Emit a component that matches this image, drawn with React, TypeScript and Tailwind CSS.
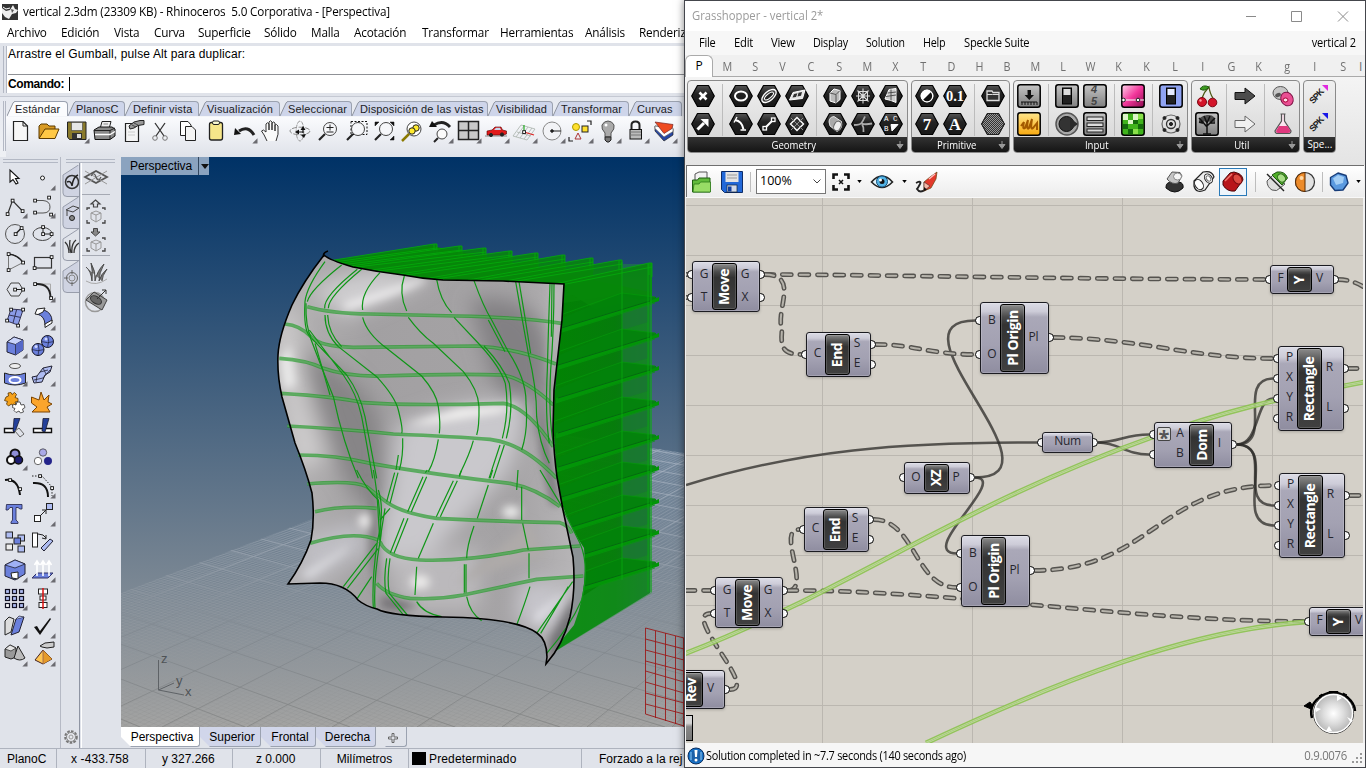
import React from "react";

type Kids = { children?: React.ReactNode };
const P = ({ d, f = "none", s = "#222", w = 1, o }: { d: string; f?: string; s?: string; w?: number; o?: number }) => (
  <path d={d} fill={f} stroke={s} strokeWidth={w} opacity={o} />
);
const C = ({ x, y, r, f = "none", s = "#222", w = 1 }: { x: number; y: number; r: number; f?: string; s?: string; w?: number }) => (
  <circle cx={x} cy={y} r={r} fill={f} stroke={s} strokeWidth={w} />
);
const Sq = ({ p, f = "#fff" }: { p: number[][]; f?: string }) => (
  <>{p.map(([x, y], i) => <rect key={i} x={x - 1.3} y={y - 1.3} width="2.8" height="2.8" fill={f} stroke="#111" strokeWidth=".9" />)}</>
);
const Cell = ({ children, tri }: Kids & { tri?: boolean }) => (
  <svg viewBox="0 0 28 28" className="h-7 w-7 shrink-0">
    {children}
    {tri && <path d="M27.5 21.3v5.2h-5.2z" fill="#6b6b70" />}
  </svg>
);

/* ---------- Rhino: standard toolbar ---------- */
const T = true;
const lens = <><C x={16} y={12} r={6.5} s="#444" f="#f6f7fa" /><P d="M11 17L5 23" s="#222" w={2.2} /></>;
const toolbar: [React.ReactNode, boolean?][] = [
  [<><P d="M7.5 4.5H17L21.5 9V23.5H7.5z" f="#f6f6f6" s="#222" w={1.2} /><P d="M17 4.5V9H21.5" s="#222" /></>],
  [<><P d="M5 21V9l2-2h6l2 2h6v3" f="#d99b25" s="#5c3b00" /><P d="M5 21.5L11 12H25L21 21.5z" f="#ffc845" s="#5c3b00" /></>],
  [<><P d="M5.5 5H24v17.5H7.5L5.5 20z" f="#8a7a2c" s="#222" /><rect x="9.5" y="5.5" width="11" height="8" fill="#e6e6e6" stroke="#444" strokeWidth=".6" /><rect x="10" y="16" width="10" height="6" fill="#333" /><rect x="15" y="17" width="4" height="4" fill="#ddd" /></>, T],
  [<><P d="M10 12L12 4.5H21L19 12z" f="#eee" s="#222" /><P d="M4 13L9 10H22L25 12V19L20 22.5H5z" f="#8a8a8a" s="#111" /><P d="M4 13.5H20L25 11M20 13.5V22" s="#222" /><P d="M5 17.5H20L25 14.5" s="#fff" w={1.3} /><P d="M13.5 7H18M13 9.5H17" s="#888" /></>],
  [<><P d="M7.5 6.5H20.5V24.5H7.5z" f="#f4f4f4" s="#222" w={1.2} /><P d="M11 9l5-4 6-1.5h4v4l-6 1-4 2.5-4 1z" f="#999" s="#222" /><P d="M14 8l4 2M16 6l4 2" s="#333" w={0.8} /><P d="M10 15H17M10 18H17" s="#ccc" /></>],
  [<><P d="M9 6L18 19M19 6L10 19" s="#333" w={1.3} /><C x={9} y={21} r={2.3} s="#777" /><C x={19} y={21} r={2.3} s="#777" /></>],
  [<><P d="M6.5 4.5H14L17 8V18.5H6.5z" f="#fff" s="#222" /><P d="M11.5 9.5H18L21.5 13V23.5H11.5z" f="#f4f4f4" s="#222" /></>],
  [<><rect x="7.5" y="5.5" width="13" height="17.5" rx="2" fill="#f6e68a" stroke="#222" strokeWidth="1.3" /><rect x="10.5" y="4" width="7" height="3.5" rx="1.5" fill="#f7f7d0" stroke="#222" /></>],
  [<><P d="M24 18Q18 8 9 14" s="#222" w={3} /><path d="M4 18l1-7 6 6z" fill="#111" /></>, T],
  [<P d="M9 24Q6 17 3.5 14Q5 11.5 8 15V7Q9.5 4.5 11 7V13V5Q12.5 2.5 14 5V13V6Q15.5 4 17 6V14V8Q18.5 6.5 20 9Q21 18 18 24" f="#fafafa" s="#333" />],
  [<><ellipse cx="14" cy="14" rx="10" ry="3.8" fill="none" stroke="#888" strokeDasharray="5 1.5" /><ellipse cx="14" cy="14" rx="3.8" ry="10" fill="none" stroke="#999" strokeDasharray="4 1" /><path d="M9 15l4-2.500v5zM17 9l2.500 4h-5zM15 18l5-1-2 4z" fill="#111" /><P d="M12 15h5M17 12v4" s="#111" w={1.2} /></>],
  [<>{lens}<P d="M12.5 10.5h7M16 7.5v6M12.5 15h7" s="#222" /></>],
  [<><rect x="9" y="4.5" width="16" height="13" fill="none" stroke="#111" strokeDasharray="2 1.5" />{lens}</>],
  [<>{lens}<P d="M5 5h4L5 9zM24 5h-4l4 4zM24 23v-4l-4 4z" f="#111" s="#111" w={0.5} /></>],
  [<><C x={16} y={12} r={7} f="#fff" s="#444" /><C x={18} y={11} r={3.2} f="#ffea2e" /><C x={14} y={14} r={3.2} f="#ffea2e" /><P d="M11 17L4 24" w={2.5} s="#8b7a00" /></>],
  [<><C x={16} y={17} r={5} f="#fafafa" s="#444" /><P d="M12 21L8 25" w={2} /><P d="M24 10Q17 2 8 8" w={2.8} /><path d="M3 10l3-6 5 6z" fill="#111" /></>, T],
  [<><rect x="4.5" y="4.5" width="20" height="18" fill="#c9c9c9" stroke="#222" strokeWidth="1.5" /><P d="M14.5 4.5V22.5M4.5 13.5H24.5" w={1.5} /></>, T],
  [<><P d="M3 19H25" s="#888" /><path d="M5 18v-4l5-1 3-3h6l1.500 3 4 1v3l-3 1H7z" fill="#e21a1a" stroke="#500" strokeWidth=".6" /><path d="M12 13l2-2.200h4l1 2.200z" fill="#c9d6ea" /><C x={9} y={18} r={1.6} f="#222" /><C x={20} y={17.5} r={1.6} f="#222" /></>, T],
  [<><P d="M3 19L17 23L25 12L11 8zM7 15L21 19M6 20L14 9M10 21L18 10M14 22L22 11" s="#a9b3ac" w={0.8} /><P d="M14 15L24 18" s="#d22" w={1.3} /><P d="M14 15V8" s="#2a2" w={1.2} /><Sq p={[[14, 15]]} /></>, T],
  [<><C x={14} y={14} r={9} s="#888" f="#f2f3f6" /><P d="M14 14H23" s="#222" /><C x={14} y={14} r={1.3} f="#222" /></>, T],
  [<><P d="M21 4h4v4M3 20v4h4" w={1.2} /><C x={10} y={10} r={3.5} f="#ffe02e" s="#a90" /><rect x="16" y="9" width="6" height="6" fill="#ffe02e" stroke="#222" /><P d="M12 16L15 22H9z" s="#a33" /></>, T],
  [<><P d="M11 20V16Q7 12 8 8Q10 4 14 4Q18 4 20 8Q21 12 17 16V20z" f="#aaa" s="#555" /><P d="M11 20h6v3l-2 2h-2l-2-2z" f="#777" s="#222" /><C x={12} y={8} r={1.5} f="#fff" s="none" /></>, T],
  [<><P d="M9.5 13V8Q9.5 4.5 13.5 4.5Q17.5 4.5 17.5 8V13" w={2} /><rect x="8" y="12.5" width="11.5" height="9.5" fill="#bbb" stroke="#111" /><P d="M8 15H19M8 18H19" s="#777" /></>, T],
  [<><P d="M5 9V14L14 24L23 18V12z" f="#2747a6" s="#222" w={0.7} /><P d="M5 9V11.5L14 20L23 14.5V11z" f="#fff" s="#666" w={0.7} /><P d="M5 5L23 7.500L22 11.5L14 16.5z" f="#ee4a20" s="#722" w={0.7} /></>, T],
];

/* ---------- Rhino: main tool palette ---------- */
const B1 = "#aebcf2";
const B2 = "#6b80dc";
const tools: [React.ReactNode, boolean?][] = [
  [<P d="M10 6V18L13 15.5L16 20L18 19L15.5 14.5H19z" f="#fff" s="#111" w={1.1} />],
  [<C x={14.5} y={14} r={2} f="#fff" />, T],
  [<><P d="M7.5 22.5L12.5 8.5L22.5 19" s="#333" w={1.2} /><Sq p={[[7.5, 22], [12.5, 8.5], [22.5, 19]]} /></>, T],
  [<><P d="M7 8.5H15Q22 9 22 15Q22 21 15 21H7" s="#555" /><Sq p={[[7, 8.5], [21, 5.5], [7, 20.5], [23, 22.5]]} /></>, T],
  [<><C x={15} y={14} r={9.5} s="#555" /><P d="M15.5 14L21.5 8" w={1.4} /><Sq p={[[15.5, 14], [21.5, 8]]} /></>, T],
  [<><ellipse cx="14.5" cy="14" rx="9.5" ry="6.5" fill="none" stroke="#444" /><P d="M15 14H23M15 14V7" /><Sq p={[[15, 14], [23.5, 14], [15, 7]]} /></>, T],
  [<><P d="M8.5 22V6Q18 7 23 14.5L8.5 22" s="#777" /><P d="M8.5 6Q18 7 23 14.5" w={1.5} /><Sq p={[[8.5, 6], [23, 14.5], [8.5, 22]]} /></>, T],
  [<><rect x="6.5" y="9.5" width="17" height="10.5" fill="none" stroke="#333" strokeWidth="1.2" /><Sq p={[[6.5, 20], [23.5, 9]]} /></>, T],
  [<><P d="M7 13.5L11 7H19L23 13.5L19 20H11z" s="#444" /><P d="M15 13.5H23" /><Sq p={[[15, 13.5], [23, 13.5]]} /></>, T],
  [<><P d="M7 8H22.5V22" s="#aaa" /><P d="M7 8Q22.5 7 22.5 22" w={2} /><Sq p={[[7, 8], [23, 22]]} /></>, T],
  [<><P d="M11 5L23 6L18 21L7 17z" f="#8a9be8" s="#335" /><P d="M9 11L21 13.5M16.5 6L13 19" s="#335" /><Sq p={[[11, 5.5], [23, 5.5], [7, 16.5], [18, 21.5]]} /></>, T],
  [<><P d="M9 10L16 6Q24 9 24 17L17 21Q17 12 9 10z" f={B2} s="#223" /><P d="M7 10l2-5 8-1-2 4-5 2.500zM17 20v3.500l7-4.500v-3z" f="#fff" s="#222" /></>, T],
  [<><P d="M7 10L14 5L23 8V18L15.5 23L7 20z" f={B2} s="#223" /><P d="M7 10L15.500 12.5L23 8L14 5z" f="#c9d4fb" s="#223" w={0.8} /><path d="M15.500 12.500L23 8V18L15.500 23z" fill="#5568c8" /><P d="M15.5 12.5V22.5" s="#223" w={0.7} /></>, T],
  [<><C x={10} y={17.5} r={6} f={B2} s="#112" /><C x={19.5} y={9.5} r={6} f={B2} s="#112" /><P d="M4 17.5Q10 20 16 17.5M10 11.5Q12 17 10 23.5M13.5 9.5Q20 12 25.5 9.5M19.5 3.5Q22 9 19.5 15.5" s="#112" w={0.6} /><C x={8} y={14.5} r={1.5} f="#cdd6ff" s="none" /><C x={18} y={7} r={1.5} f="#cdd6ff" s="none" /></>, T],
  [<><ellipse cx="15" cy="6" rx="5.5" ry="2.5" fill="#eee" stroke="#555" /><P d="M4.5 13Q15 17 25.5 13V23Q15 27 4.5 23z" f={B2} s="#222" /><ellipse cx="15" cy="20" rx="5.5" ry="3" fill="none" stroke="#fff" strokeWidth="2" /></>, T],
  [<><P d="M4 17L9 16L15 8L24 6L22 12L17 15L14 22L6 23z" f={B1} s="#223" /><P d="M6 20L15 18L22 10M9 16L8 22M12 12L20 10M15 8L18 14" s="#223" w={0.8} /></>, T],
  [<><path d="M6 9l2.500-1L8 5l3-.5 1 2 2.500-2 2 2-1.500 3 3 1v3l-3 .5 1 3-3 1-1.500-2-3 2-2-2 1-2.500-3-1z" fill="#f5a11a" stroke="#553300" strokeWidth=".8" /><path d="M13 16l3 1 1-3 3 0 1 3 3-.5 1 3-2.500 1.500 1 3-3 1-1.500-2-3 1.500-2-2 1-2-2.500-1z" fill="#fff" stroke="#333" strokeWidth=".8" /></>],
  [<P d="M3.5 9L11 12L13 4L16 12L21 7L20 14L24 16L19 19L22 24H4L9 19L3.500 15z" f="#fba52c" s="#7a4300" />],
  [<><P d="M4.5 12.5H14V16.5H4.5z" f="#fff" w={1.4} s="#111" /><P d="M14 2.5H20L15 16L13 15z" f="#23409a" s="#112" w={0.7} /><P d="M15 15L19 12L24 18L20 21z" s="#666" /></>],
  [<><P d="M5.5 12.5H23.5V16.5H5.5z" f="#fff" w={1.4} s="#111" /><P d="M15 2.5H21L17 16L14 15z" f="#23409a" s="#112" w={0.7} /></>],
  [<><C x={15} y={10} r={4.5} f="#8e8ed8" s="#111" w={2} /><C x={11} y={16} r={4} f="#fff" s="#111" w={2} /><C x={18.5} y={16} r={4} f="#1c1c70" s="#111" w={1.5} /></>, T],
  [<><C x={15} y={8.5} r={3.7} f="#aaaae8" s="#444" w={0.8} /><C x={10} y={17} r={3.7} f="#fff" s="#444" w={0.8} /><C x={20} y={17} r={3.7} f="#23238a" s="#23238a" w={0.8} /></>],
  [<><P d="M5 8Q18 6 20 23" w={2} s="#111" /><Sq p={[[10, 8], [20, 17]]} /></>],
  [<><P d="M5 11Q20 10 20 25" w={2} s="#111" /><path d="M4 4H14L24 15V24" fill="none" stroke="#222" strokeDasharray="1.5 1.5" /><Sq p={[[12, 4], [24, 16]]} /></>, T],
  [<P d="M6.5 4.5H22V9H20L18 7.5H16V20L18 22V23.5H11V22L12.5 20V7.5H10L8 10H6z" f={B2} s="#224" w={0.8} />],
  [<><rect x="18.5" y="3.5" width="6" height="6" fill={B1} stroke="#222" /><rect x="6.5" y="15.5" width="6" height="6" fill="#fff" stroke="#222" /><P d="M13 15L18 10M18 14V10H14" /></>, T],
  [<>{[[6, 4, B1], [18, 7, B1], [14, 10, B2], [6, 16, "#eee"], [18, 18, B1]].map(([x, y, f], i) => <rect key={i} x={x as number} y={y as number} width="6.5" height="6" fill={f as string} stroke="#222" />)}</>],
  [<><rect x="4.5" y="5" width="5" height="14" fill="#fff" stroke="#222" /><P d="M10 6Q16 6 18 10M14 10l4 1 0-4" /><P d="M13 20L22 11L25 13L16 23z" f={B1} s="#223" /></>],
  [<><P d="M5 9L15 4L25 8V18L15 24L5 20z" f={B2} s="#223" /><P d="M5 9L15 12L25 8L15 4z" f="#9fb0f5" s="#223" w={0.8} /><P d="M11 17L18 16V23L12 22z" f="#fff" s="#222" /></>, T],
  [<><P d="M4 22L9 17H25L20 22z" f={B2} s="#336" /><P d="M9 20V6M15 20V6M21 20V6M6.500 9l2.500-4 2.500 4M12.500 9l2.500-4 2.500 4M18.500 9l2.500-4 2.500 4" s="#fff" w={1.6} /></>, T],
  [<>{[0, 1, 2].map(r => [0, 1, 2].map(c => <rect key={`${r}${c}`} x={5.5 + c * 7} y={5.5 + r * 7} width="4" height="4" fill={c === 0 && r === 2 ? "#fff" : B1} stroke="#112" strokeWidth="1.2" />))}</>, T],
  [<><rect x="10.5" y="5" width="9" height="5" fill="#fff" stroke="#222" /><rect x="12" y="12" width="6" height="4" fill="#fff" stroke="#222" /><rect x="11" y="18.5" width="8" height="5" fill="#fff" stroke="#222" /><P d="M15 4V25" s="#d11" w={1.5} /></>, T],
  [<><P d="M5 9L9 5L14 7L11 20L5 23z" f="#ddd" s="#222" /><P d="M16 7L24 5L19 20L11 23z" f={B2} s="#223" /><P d="M16 7L19 4L24 5" f={B1} s="#223" w={0.7} /></>, T],
  [<path d="M6 15l3-1 3 5L22 6l1 1L12 23z" fill="#111" />, T],
  [<><P d="M5 9L10 5L16 8V17L11 19L5 17z" f="#999" s="#222" /><P d="M5 9L11 11L16 8L10 5z" f="#e5e5e5" s="#222" w={0.7} /><P d="M18 6L25 18Q20 22 14 18z" f="#bbb" s="#222" /></>, T],
  [<><P d="M15 10L24 19L15 24L7 20z" f="#ffc552" s="#422" /><path d="M15 10L24 19L15 24z" fill="#e59a2a" /><P d="M15 10V24" s="#855" w={0.7} /><P d="M12 6l5-3 9-1v5l-7 1-5-1z" f="#ccc" s="#222" /></>, T],
];

const leftMenu: [string, string][] = [
  ["Archivo", "w-[54px]"], ["Edición", "w-[53px]"], ["Vista", "w-[40px]"], ["Curva", "w-[44px]"], ["Superficie", "w-[66px]"], ["Sólido", "w-[47px]"],
  ["Malla", "w-[43px]"], ["Acotación", "w-[68px]"], ["Transformar", "w-[78px]"], ["Herramientas", "w-[85px]"], ["Análisis", "w-[54px]"], ["Renderiz", "w-[44px]"],
];
const leftTabs: [string, string][] = [
  ["Estándar", "w-[61px]"], ["PlanosC", "w-[57px]"], ["Definir vista", "w-[74px]"], ["Visualización", "w-[81px]"], ["Seleccionar", "w-[72px]"],
  ["Disposición de las vistas", "w-[136px]"], ["Visibilidad", "w-[65px]"], ["Transformar", "w-[76px]"], ["Curvas", "w-[53px]"],
];

function Tab({ name, w, on }: { name: string; w: string; on: boolean }) {
  return (
    <div className={`flex h-[15px] shrink-0 ${w}`}>
      <svg viewBox="0 0 8 15" className="h-[15px] w-2 shrink-0">
        <path d="M0 15L6 2Q7 .5 8 .5V15z" fill={on ? "#fbfcfe" : "#ced5ea"} />
        <path d="M0 15L6 2Q7 .5 8 .5" fill="none" stroke="#8e949f" />
      </svg>
      <div className={`flex-1 whitespace-nowrap rounded-tr-[4px] border-t border-r border-[#9ba2b0] text-[11px] leading-[14px] tracking-[0.15px] text-[#1c1c24] ${on ? "bg-[#fbfcfe]" : "bg-[#ced5ea]"}`}>{name}</div>
    </div>
  );
}

/* ---------- Rhino: perspective viewport ---------- */
function groundLines(vx: number, step: number, from: number, to: number) {
  let d = "";
  for (let x = from; x <= to; x += step) d += `M${vx} 132L${x.toFixed(1)} 727`;
  return d;
}
const upper = [
  "M112 230Q180 250 300 252L560 258Q760 262 875 280",
  "M45 282Q90 285 125 322Q150 350 250 352L620 348Q740 355 858 402",
  "M28 385Q110 390 160 415Q230 440 330 438Q560 430 700 435Q770 450 850 525",
  "M32 490Q200 500 280 518Q420 528 700 520Q770 530 850 650",
  "M52 588Q200 595 370 612Q560 620 660 628Q760 640 860 745",
  "M85 675Q200 675 300 700Q500 735 720 760Q800 775 870 830",
];
const upperThin = [
  "M165 95Q110 170 105 215Q100 300 120 320Q150 400 190 500Q220 640 265 745", "M108 220Q106 290 124 325", "M215 105Q120 180 112 215",
  "M262 118Q160 200 164 235M275 118Q175 200 175 235", "M165 255Q165 310 205 350L320 440Q375 500 385 540Q400 600 395 610M398 625Q400 680 388 720",
  "M173 255Q175 310 215 350", "M330 128Q270 190 278 240M278 262Q290 310 350 355L455 438Q500 490 505 530Q512 580 508 610M505 628Q495 690 475 725",
  "M403 138Q385 190 410 243M415 262Q450 310 490 340L580 425Q625 480 627 530Q628 590 620 615M610 632Q600 670 568 735",
  "M500 148Q510 210 545 248M552 262L630 345Q690 410 706 460Q719 540 697 625M642 348Q700 410 718 460Q731 540 709 625M690 645L657 745M703 645L670 745",
  "M612 152Q640 230 665 270L715 365Q770 450 768 520Q775 600 755 660M655 270L705 365", "M737 155Q755 260 775 370Q800 470 800 560Q808 640 838 700M747 155Q765 260 782 370",
  "M840 162Q835 300 832 420Q825 560 838 640", "M852 162Q852 300 842 420Q835 560 850 640M846 162L844 320",
  "M125 325L230 435Q270 490 285 560Q300 640 320 745M118 300L220 435Q260 490 275 560Q290 640 308 745", "M135 340L180 495", "M385 675L378 720",
];
const lower = [
  "M112 42Q250 30 290 50Q340 90 355 100Q400 130 500 145Q700 155 870 158Q895 165 905 190", "M135 125Q220 105 320 115",
  "M330 215Q350 265 450 270Q600 275 760 240L930 228", "M120 220Q250 180 325 210", "M320 340Q350 375 420 385Q500 390 580 375Q720 345 800 328L940 318",
];
const lowerThin = [
  "M260 0Q290 60 325 90L330 140Q335 200 330 215", "M310 0Q322 60 325 140L330 215Q310 330 315 415", "M325 60Q345 120 322 215Q305 330 310 415",
  "M374 8L350 95M384 8L360 100", "M402 145L361 248M414 145L372 250", "M459 20L413 125M470 20L424 125", "M490 160L445 265", "M550 32L499 140M562 32L511 140",
  "M655 45L622 145", "M612 168Q590 230 590 265", "M744 0L740 60M755 50L755 150", "M758 160L775 240", "M350 265Q340 330 348 370L400 435M360 265Q350 330 358 370L412 435",
  "M440 290L435 375", "M440 395Q460 430 515 440", "M583 283V368M588 283V368", "M590 380Q600 430 635 452", "M777 250V325", "M780 350Q765 400 740 465", "M320 220L220 350M325 235L232 355",
  "M305 320L262 385", "M908 335L800 490M895 350L812 490", "M830 550Q900 470 935 390Q960 290 930 220Q910 180 870 100L810 0", "M330 150L360 115M345 115L330 210", "M575 0L568 20M668 0L660 25M472 0L466 8",
];
const surfacePath = "M324 255Q329 260 353 267Q378 272 403 275Q423 279 443 280L503 281L564 284L562 320L554 390L553 430Q554 455 557 477L563 510L573 557Q576 590 570 617Q563 645 546 664L547 657Q547 640 537 633Q517 618 443 617Q390 616 377 609Q365 606 358 600Q345 583 320 583L288 584Q303 563 311 540Q315 520 312 493Q306 470 295 443L282 397Q277 375 278 355Q279 335 292 305Q303 282 324 255z";
const shelves: number[] = [298, 334, 367, 402, 436, 467, 500, 531, 563];
const fins: [number, number, number, number][] = [
  [437, 244, 328, 261], [462, 246, 335, 264], [486, 248, 350, 266], [512, 251, 372, 270], [538, 253, 400, 274], [565, 255, 430, 278], [593, 258, 468, 280], [622, 260, 505, 281], [652, 263, 555, 284],
];

function Scene() {
  return (
    <svg viewBox="121 157 563 570" className="col-start-1 row-start-1 h-[570px] w-[563px]">
      <defs>
        <linearGradient id="sky" x1="0" y1="0" x2="0" y2="1"><stop offset="0" stopColor="#003266" /><stop offset="1" stopColor="#a3a3a2" /></linearGradient>
        <linearGradient id="major" gradientUnits="userSpaceOnUse" x1="0" y1="440" x2="0" y2="727"><stop offset="0" stopColor="#aab6c6" /><stop offset=".4" stopColor="#98a2ae" /><stop offset=".65" stopColor="#808890" /><stop offset="1" stopColor="#838483" /></linearGradient>
        <linearGradient id="minor" gradientUnits="userSpaceOnUse" x1="0" y1="440" x2="0" y2="727"><stop offset="0" stopColor="#c6d0dc" /><stop offset=".5" stopColor="#a3aab2" /><stop offset="1" stopColor="#8a8b8b" /></linearGradient>
        <linearGradient id="box" gradientUnits="userSpaceOnUse" x1="555" y1="0" x2="655" y2="0"><stop offset="0" stopColor="#008400" /><stop offset=".6" stopColor="#047d08" /><stop offset="1" stopColor="#147029" /></linearGradient>
        <linearGradient id="surf" gradientUnits="userSpaceOnUse" x1="280" y1="0" x2="575" y2="0"><stop offset="0" stopColor="#b5b3b4" /><stop offset=".3" stopColor="#a2a0a2" /><stop offset=".8" stopColor="#a5a3a5" /><stop offset="1" stopColor="#b7b5b7" /></linearGradient>
        <clipPath id="sc"><path d={surfacePath} /></clipPath>
        <clipPath id="gc"><path d="M121 593L540 431L684 453V727H121z" /></clipPath>
        <filter id="b10" x="-50%" y="-50%" width="200%" height="200%"><feGaussianBlur stdDeviation="10" /></filter>
        <filter id="b4" x="-50%" y="-50%" width="200%" height="200%"><feGaussianBlur stdDeviation="4.5" /></filter>
      </defs>
      <rect x="121" y="157" width="563" height="570" fill="url(#sky)" />
      <g clipPath="url(#gc)" fill="none">
        <path d={groundLines(1327, 8.5, -1400, 1250)} stroke="url(#minor)" strokeWidth=".6" opacity=".4" />
        <path d={groundLines(-1295, 10.5, -300, 2600)} stroke="url(#minor)" strokeWidth=".6" opacity=".4" />
        <path d={groundLines(1327, 85, -1368, 1250)} stroke="url(#major)" opacity=".75" />
        <path d={groundLines(-1295, 105, -280, 2600)} stroke="url(#major)" opacity=".75" />
      </g>
      <path d="M330 262L432 246L650 292V593L549 655L577 590L557 480L553 420L563 284z" fill="url(#box)" opacity=".97" />
      <path d="M623 264H652V593L548 656L577 600L623 570z" fill="#1d9a2c" opacity=".4" />
      {fins.map(([x, y, lx, ly], i) => (
        <g key={i}>
          <path d={`M${lx} ${ly}L${x - 2} ${y}H${x}V${y + 34}L${lx + 40} ${ly + 25}z`} fill="#078709" opacity=".85" />
          <path d={`M${lx} ${ly}L${x - 3} ${y}H${x}V${y + 14}M${x - 3} ${y}V${y + 12}M${lx + 6} ${ly + 1}L${x} ${y + 4}`} stroke="#05a80b" fill="none" strokeWidth=".9" />
        </g>
      ))}
      {shelves.map((y, i) => (
        <g key={y}>
          {i < 8 && <path d={`M622 ${y - 3}L648 ${y + 4}V${y + 24}L622 ${y + 32}z`} fill="#1d6f38" opacity=".6" />}
          <path d={`M552 ${y + 24}L622 ${y - 5}L656 ${y - 1}V${y + 3}L552 ${y + 34}z`} fill="#02830a" opacity=".9" />
          <path d={`M556 ${y + 31}L652 ${y + 2}L659 ${y - 1}V${y + 3}L556 ${y + 36}z`} fill="#029507" />
          <path d={`M552 ${y + 20}L622 ${y - 5}L655 ${y - 1}M556 ${y + 36}L655 ${y + 5}`} stroke="#04990a" fill="none" strokeWidth=".7" />
          <path d={`M558 ${y + 31}L650 ${y + 3}`} stroke="#066312" strokeWidth=".9" />
        </g>
      ))}
      <path d="M648 264V592M651 263V592M622 262V580" stroke="#07ab10" fill="none" opacity=".8" />
      <path d="M556 484Q565 520 584 548Q588 590 574 625L548 657z" fill="#8d9396" />
      <path d={surfacePath} fill="url(#surf)" />
      <g clipPath="url(#sc)">
        <g filter="url(#b10)">
          <path d="M300 350Q360 370 380 420L388 500Q370 520 345 480z" fill="#868486" />
          <path d="M470 300Q540 290 548 350L548 440Q510 420 490 370z" fill="#828083" />
          <path d="M276 330L294 300L304 400L325 460L295 470z" fill="#cfcdce" />
          <path d="M310 290Q380 255 430 280L345 318z" fill="#cfced0" />
          <path d="M398 425Q470 395 532 402L510 470L430 555L375 560L390 480z" fill="#c9c8cc" />
          <path d="M300 540L360 520L370 550L300 590z" fill="#c0bfc5" />
          <path d="M385 560L480 545L480 610L400 610z" fill="#bbb9bc" />
          <path d="M520 580L570 585L560 635L515 620z" fill="#c6c5cb" />
        </g>
        <g filter="url(#b4)">
          <path d="M345 310Q390 298 428 280L422 278Q365 296 343 304z" fill="#f0eff0" />
          <path d="M405 425L460 408L520 404L500 413L430 424z" fill="#f1f0ef" />
          <path d="M280 360L290 345L296 385L284 390z" fill="#e9e9e9" />
          <ellipse cx="365" cy="521" rx="6" ry="7" fill="#f4f3f3" />
          <ellipse cx="511" cy="512" rx="9" ry="6" fill="#eeeeed" />
          <ellipse cx="420" cy="582" rx="10" ry="7" fill="#ecebea" />
          <path d="M300 575L350 545L345 552L310 578z" fill="#dcdce0" />
          <path d="M535 615L565 592L560 600L535 625z" fill="#e3e3e8" />
          <path d="M370 480L380 520L377 590L369 560z" fill="#7c7a7c" />
          <path d="M540 400L552 460L560 505L551 505L540 450z" fill="#777578" />
          <path d="M548 640L575 595L578 630L550 665z" fill="#747377" />
          <path d="M382 595L420 605L400 612L380 608z" fill="#777578" />
          <path d="M455 585L530 522L545 555L480 575z" fill="#aeaaa9" />
          <path d="M552 286L562 286L558 340L549 380z" fill="#bcbabc" />
        </g>
      </g>
      <g fill="none">
        <g transform="translate(270 230) scale(.33333)">
          {upper.map((d, i) => <g key={i}><path d={d} stroke="#139a1a" strokeWidth="11" opacity=".62" /><path d={d} stroke="#62aa65" strokeWidth="5" opacity=".8" /></g>)}
          {upperThin.map((d, i) => <path key={i} d={d} stroke="#0f9617" strokeWidth="3.6" />)}
        </g>
        <g transform="translate(270 470) scale(.33333)">
          {lower.map((d, i) => <g key={i}><path d={d} stroke="#139a1a" strokeWidth="11" opacity=".62" /><path d={d} stroke="#62aa65" strokeWidth="5" opacity=".8" /></g>)}
          {lowerThin.map((d, i) => <path key={i} d={d} stroke="#0f9617" strokeWidth="3.6" />)}
        </g>
        <path d={surfacePath} stroke="#000" strokeWidth="1.6" />
        <path d="M324 257Q322 253 328 251" stroke="#000" strokeWidth="1.5" />
        <path d="M645.5 628V714M655.5 631V718M665.5 633V721M675.5 636V724M683.5 638V727M645.5 628L684 638M645.5 639L684 649M645.5 650L684 660M645.5 661L684 671M645.5 671L684 682M645.5 682L684 693M645.5 693L684 703M645.5 704L684 714M645.5 714L684 726" stroke="#9b1b1b" strokeWidth=".9" />
        <path d="M158.5 660V690L184 695M158.5 690L174 683" stroke="#5e6266" />
      </g>
      <g fontFamily="Liberation Sans, sans-serif" fontSize="13" fill="#4f5356"><text x="161" y="663">z</text><text x="176" y="685">y</text><text x="185" y="696">x</text></g>
    </svg>
  );
}

/* ---------- Rhino: side bar ---------- */
function SideTab({ on, children }: Kids & { on?: boolean }) {
  return (
    <svg viewBox="0 0 17 32" className="h-8 w-[17px]">
      <path d="M16.5 0L1 10V28Q1 31.5 5 31.5H17" fill={on ? "#e0e3ea" : "#cfd3e2"} stroke="#989dab" />
      {children}
    </svg>
  );
}

function Rhino() {
  return (
    <section className="flex h-[768px] w-[684px] shrink-0 flex-col overflow-hidden bg-[#e0e3ea] text-black">
      <header className="flex h-[23px] items-center bg-white pl-[2px]">
        <svg viewBox="0 0 16 16" className="h-4 w-4"><rect width="16" height="16" fill="#333" /><path d="M0 4l4 3 4-1 3-5 2 4 3 1-2 3-4 1-3 5-4-2-3-4z" fill="#eee" /><path d="M1 3l3 2 4-1" stroke="#fff" fill="none" /><path d="M9 5l3 1-2 3z" fill="#555" /></svg>
        <span className="ml-[5px] origin-left scale-x-[0.976] whitespace-pre font-['Open_Sans',sans-serif] text-[12px] tracking-[-0.18px]">{"vertical 2.3dm (23309 KB) - Rhinoceros  5.0 Corporativa - [Perspectiva]"}</span>
      </header>
      <nav className="flex h-5 items-center overflow-hidden bg-white pl-[7px] font-['Open_Sans',sans-serif] text-[12px] tracking-[-0.18px]">
        {leftMenu.map(([t, w]) => <span key={t} className={`shrink-0 origin-left scale-x-[0.98] whitespace-nowrap ${w}`}>{t}</span>)}
      </nav>
      <div className="flex h-[53px] pt-[3px] pb-[3px] pl-[3px]">
        <div className="h-[47px] w-1 border-x border-[#b3b8c4]" />
        <div className="flex-1 bg-white pl-px text-[12px]">
          <div className="h-[29px] border-b border-[#8f9196] leading-[16px] tracking-[0.13px]">Arrastre el Gumball, pulse Alt para duplicar:</div>
          <div className="flex h-[18px] items-center font-bold"><span className="tracking-[-0.4px]">Comando:</span><span className="ml-[5px] h-[14px] w-px bg-black" /></div>
        </div>
      </div>
      <div className="flex h-[61px] border-t border-[#c5c9d3] bg-gradient-to-b from-[#e6e9f0] to-[#eef0f4] pt-1 pl-[3px]">
        <div className="h-[50px] w-[3px] shrink-0 border-x border-[#b3b8c4]" />
        <div className="flex flex-col overflow-hidden">
          <div className="ml-px flex h-[15px]">{leftTabs.map(([t, w], i) => <Tab key={t + i} name={t} w={w} on={i === 0} />)}</div>
          <div className="flex h-[41px] w-[678px] border-t border-[#f3f5f9] bg-gradient-to-b from-[#fafbfd] to-[#dfe2e9]">{toolbar.map(([g, t], i) => <Cell key={i} tri={t}>{g}</Cell>)}</div>
        </div>
      </div>
      <div className="flex h-[591px]">
        <aside className="flex w-[60px] shrink-0 flex-col pt-[2px]">
          <div className="ml-[3px] h-[4px] w-[55px] border-y border-[#b3b8c4]" />
          <div className="mt-px grid w-14 grid-cols-2">{tools.map(([g, t], i) => <Cell key={i} tri={t}>{g}</Cell>)}</div>
        </aside>
        <aside className="flex w-[61px] shrink-0 flex-col border-l border-[#b6bac5] pt-[2px]">
          <div className="ml-[5px] h-[4px] w-[49px] border-y border-[#b3b8c4]" />
          <div className="flex flex-1">
            <div className="flex w-[22px] flex-col items-end border-r border-[#8f95a3] pt-[2px]">
              <SideTab><C x={10} y={17} r={6.5} s="#333" w={1.5} /><P d="M5 17q4-2 5 4q1-9 6-11" w={1.5} /></SideTab>
              <SideTab><P d="M4 13l7-4 6 2-6 4zM5 14v5" s="#444" /><C x={10} y={21} r={2.5} f="#888" /></SideTab>
              <SideTab on><P d="M3 13q4 4 4 11M8 11q-1 6 1 13M14 11q-5 4-4 13M17 14q-5 3-5 10" w={1.3} s="#333" /></SideTab>
              <SideTab><C x={10} y={17} r={5.5} s="#666" /><C x={10} y={17} r={3} s="#888" /><P d="M10 9v4M10 21v4M2 17h4" s="#666" /></SideTab>
              <svg viewBox="0 0 16 16" className="mt-auto mb-[3px] h-4 w-4"><circle cx="8" cy="8" r="5.8" fill="none" stroke="#777" strokeWidth="2" strokeDasharray="2.6 1.2" /><circle cx="8" cy="8" r="4.5" fill="#e6e8ed" stroke="#888" /><circle cx="8" cy="8" r="2" fill="none" stroke="#999" /></svg>
            </div>
            <div className="ml-px flex flex-1 flex-col items-center border-l border-white pr-[11px]">
              <Cell><P d="M3 14L14 8L25 14L14 20z" s="#555" w={1.8} /><P d="M3 8L25 21M3 21L25 8" s="#999" /><P d="M9 13Q12 8 14 14T19 14" s="#555" w={1.2} /></Cell>
              <div className="mt-[3px] h-px w-7 bg-[#a5a9b3]" />
              <div className="mt-[3px]"><Cell><P d="M13.5 2l4.5 4H15.500v3h-4V6H9z" s="#444" w={1.200} /><P d="M5 12v-2h3M20 10h3v2M5 22v3h3M23 22v3h-3" s="#444" w={1.3} /><P d="M9 15l5-2 5 2v6l-5 3-5-3zM9 15l5 2 5-2M14 17v7" s="#999" /></Cell></div>
              <Cell><P d="M13.5 10l4.5-4H15.500V2.500h-4v3.500H9z" s="#444" f="#888" /><P d="M5 14v-2h3M20 12h3v2M5 22v3h3M23 22v3h-3" s="#444" w={1.3} /><P d="M9 16l5-2 5 2v6l-5 3-5-3zM9 16l5 2 5-2M14 18v7" s="#999" /></Cell>
              <div className="mt-[1px] h-px w-7 bg-[#a5a9b3]" />
              <div className="mt-[3px] flex flex-col">
                <Cell><P d="M4 8Q9 12 10 22Q11 12 9 4Q14 12 13 22Q15 12 22 5Q17 14 17 22Q19 15 25 10Q20 17 20 22" f="#777" s="#444" w={0.9} /><P d="M4 22Q14 28 25 20" s="#aaa" /></Cell>
                <Cell><C x={13} y={15} r={9.5} s="#999" w={1.5} /><P d="M4 13L12 5L25 13L20 23z" f="#999" s="#444" /><ellipse cx="14" cy="13" rx="6" ry="3.500" transform="rotate(30 14 13)" fill="#666" stroke="#333" /><P d="M15 12L24 3M20 3h4v4" s="#333" /></Cell>
              </div>
            </div>
          </div>
        </aside>
        <div className="flex w-[563px] flex-col overflow-hidden">
          <div className="grid h-[570px] shrink-0">
            <Scene />
            <div className="z-10 col-start-1 row-start-1 flex h-[18px] w-[88px] items-center bg-[#8ba3bf] pl-[9px] text-[12px] tracking-[-0.05px]">
              <span className="w-[68px]">Perspectiva</span><span className="h-[18px] w-px bg-[#33475f]" />
              <svg viewBox="0 0 8 5" className="ml-[2px] h-[5px] w-2"><path d="M0 0h8L4 5z" fill="#111" /></svg>
            </div>
          </div>
          <div className="flex h-[21px] text-[12px] leading-[21px]">
            {[["Perspectiva", "w-[79px]", "bg-white"], ["Superior", "w-[61px]", "bg-[#d1d6ea]"], ["Frontal", "w-[55px]", "bg-[#d1d6ea]"], ["Derecha", "w-[60px]", "bg-[#d1d6ea]"], ["+", "w-[31px]", "bg-[#e0e3ea]"]].map(([t, w, b]) => (
              <div key={t} className={`h-5 shrink-0 rounded-br-[3px] border-r border-b border-[#9ba2b0] pl-1 text-center [clip-path:polygon(0_0,100%_0,100%_100%,10px_100%,0_50%)] ${w} ${b}`}>
                {t === "+" ? <svg viewBox="0 0 10 10" className="mx-auto mt-[6px] h-[10px] w-[10px]"><path d="M4 .5h2V4h3.5v2H6v3.5H4V6H.5V4H4z" fill="none" stroke="#666" /></svg> : t}
              </div>
            ))}
          </div>
        </div>
      </div>
      <footer className="flex h-5 border-t border-[#aeb3be] text-[12px] leading-[20px] whitespace-nowrap">
        <div className="w-[57px] shrink-0 border-r border-[#aeb3be] pl-[7px]">PlanoC</div>
        <div className="w-[89px] shrink-0 border-r border-[#aeb3be] pl-[14px] tracking-[0.1px]">x -433.758</div>
        <div className="w-[87px] shrink-0 border-r border-[#aeb3be] pl-[16px]">y 327.266</div>
        <div className="w-[88px] shrink-0 border-r border-[#aeb3be] pl-[23px]">z 0.000</div>
        <div className="w-[88px] shrink-0 border-r border-[#aeb3be] text-center">Milímetros</div>
        <div className="flex w-[173px] shrink-0 items-center border-r border-[#aeb3be] pl-[3px] tracking-[0.15px]"><span className="mr-[3px] h-[13px] w-[14px] bg-black" />Predeterminado</div>
        <div className="pl-[17px]">Forzado a la rej</div>
      </footer>
    </section>
  );
}

/* ---------- Grasshopper: ribbon icons ---------- */
const Hex = ({ children }: Kids) => (
  <svg viewBox="0 0 24 24" className="h-6 w-6">
    <path d="M.7 12L6.5 1.5H17.5L23.3 12L17.5 22.5H6.5z" fill="url(#hexg)" stroke="#000" strokeWidth="1.2" strokeLinejoin="round" />
    {children}
  </svg>
);
const Box = ({ children, c = "url(#boxg)" }: Kids & { c?: string }) => (
  <svg viewBox="0 0 24 24" className="h-6 w-6">
    <rect x=".8" y=".8" width="22.4" height="22.4" rx="2.5" fill={c} stroke="#000" strokeWidth="1.5" />
    {children}
  </svg>
);
const Plain = ({ children }: Kids) => <svg viewBox="0 0 24 24" className="h-6 w-6">{children}</svg>;
const W = "#fff";
const G = "#999";
const serif = { fontFamily: "Liberation Serif, serif", fontWeight: 700, fill: W, textAnchor: "middle" as const };
const spk = (c: string) => (
  <Plain><path d="M15 1h6v6z" fill={c} /><text x="1" y="15.5" transform="rotate(-48 9 12)" fontSize="9" fontWeight="700" fontFamily="Liberation Sans, sans-serif" fill="#222" textLength="17">SPK</text></Plain>
);
const groups: { name: string; w: string; cols: ([React.ReactNode, React.ReactNode] | null)[] }[] = [
  { name: "Geometry", w: "w-[221px]", cols: [
    [<Hex><P d="M8.5 8.5L15.5 15.5M15.5 8.5L8.5 15.5" s={W} w={2.6} /></Hex>, <Hex><P d="M6.5 17.5L13 11" s={W} w={3} /><path d="M9.500 7h8v8z" fill={W} /></Hex>],
    null,
    [<Hex><ellipse cx="12" cy="12" rx="6" ry="4.6" fill="none" stroke={W} strokeWidth="2" /></Hex>, <Hex><P d="M6 8Q13 9 14.500 17.500" s={W} w={2} /><P d="M5 10.500l3-5.500M11.500 18h5.500" s={W} w={1.4} /></Hex>],
    [<Hex><ellipse cx="12" cy="12" rx="8.5" ry="4.500" transform="rotate(-40 12 12)" fill="#444" stroke={W} strokeWidth="1.3" /><ellipse cx="12" cy="12" rx="5.500" ry="2.200" transform="rotate(-40 12 12)" fill="#222" stroke={W} /></Hex>, <Hex><P d="M8 16L16 8" s={W} w={2} /><rect x="6" y="14.500" width="3.500" height="3.500" fill="#222" stroke={W} strokeWidth="1.3" /><rect x="14.500" y="6" width="3.500" height="3.500" fill="#222" stroke={W} strokeWidth="1.3" /></Hex>],
    [<Hex><path d="M4.5 16L8 8.500L20 6L17.500 14.500z" fill="#e6e6e6" stroke={W} /><path d="M7.500 13.500l1.500-3.500 3.500-.8-1.500 3.700zM12.500 12.500l1-3.700 3.500-.8-1 3.700z" fill="#333" /></Hex>, <Hex><P d="M12 5.500L18.500 12L12 18.500L5.500 12z" f="#333" s={W} w={1.4} /><P d="M6 6l12 12M18 6L6 18" s={G} w={0.9} /></Hex>],
    null,
    [<Hex><P d="M7 9l4-4 6 1.5v9L13 19l-6-2z" f="#bbb" s={W} /><P d="M7 9l6 1.5 4-4M13 10.5V19" s="#555" /></Hex>, <Hex><path d="M6 10Q6 5 11 4.500L18.500 9.500Q20 17 14 19.500L7 14z" fill="#aaa" stroke={W} strokeWidth=".8" /><ellipse cx="14.500" cy="14" rx="3.500" ry="5" transform="rotate(25 14.500 14)" fill="#eee" stroke="#666" /></Hex>],
    [<Hex><P d="M12 4.500v15M5 12h14M6.500 6.500l11 11M17.500 6.500L6.500 17.500M7.500 7.500h9v9h-9z" s="#ddd" w={1.1} /></Hex>, <Hex><P d="M3 13Q9 13 10.500 11T14 4.500M11 11.500Q14 13 21 11.500M11 12Q13 15 12.500 20" s="#aaa" w={1.8} /></Hex>],
    [<Hex><P d="M6 15L10 5.500L17 4.500V18.500L12 16.500z" f="#ccc" s={W} /><P d="M12 5.500v11M7 12.500l10-1.500M8.500 9l8.500-1" s="#444" w={0.9} /></Hex>, <Hex><P d="M12 12.500H19L13 19z" f={W} s={W} /><g fontFamily="Liberation Mono, monospace" fontSize="7.5" fill={W}><text x="5" y="9">A</text><text x="14" y="9">C</text><text x="5" y="18.5">B</text></g></Hex>],
  ] },
  { name: "Primitive", w: "w-[99px]", cols: [
    [<Hex><C x={12} y={12} r={5.8} f={W} s={W} /><path d="M16.300 7.700A6 6 0 1 0 7.700 16.300z" fill="#111" transform="rotate(180 12 12)" /><C x={12} y={12} r={5.8} s={W} w={1.300} /></Hex>, <Hex><text x="12" y="18" fontSize="17" {...serif}>7</text></Hex>],
    [<Hex><text x="12" y="17" fontSize="14.5" {...serif}>0.1</text></Hex>, <Hex><text x="12" y="18" fontSize="17" {...serif}>A</text></Hex>],
    null,
    [<Hex><P d="M6 9V7h5l1 1.500h6v8H6z" f="#333" s="#ddd" w={1.3} /><P d="M6 10.500h4l1.500 0H18" s="#ddd" /></Hex>, <Hex><path d="M.7 12L6.5 1.5H17.5L23.3 12L17.5 22.5H6.5z" fill="url(#chk)" stroke="#222" /></Hex>],
  ] },
  { name: "Input", w: "w-[175px]", cols: [
    [<Box><path d="M10.5 6h3.5v5h3l-4.7 5-4.7-5h3z" fill="#111" /><P d="M4 18H20M5 18v3M8 18v3M11 18v3M14 18v3M17 18v3M20 18v3" s="#111" /></Box>, <Box c="url(#goldg)"><P d="M4 14L7 10Q5 18 8 16L11 8Q9 19 12 16L15 7Q13 19 16 16L20 11V18" s="#a35a00" w={2} /></Box>],
    null,
    [<Box><rect x="7.5" y="4" width="9" height="16" fill="#222" stroke="#000" /><rect x="8.5" y="5" width="7" height="6" fill="#ddd" /></Box>, <Plain><C x={12} y={12} r={11} f="#a8a8a8" s="#555" w={1.5} /><C x={11.5} y={12} r={7.5} f="#333" s="#111" /><path d="M15 6l8 6-8 6z" fill="#2a2a2a" /></Plain>],
    [<Box><g fontFamily="Liberation Sans, sans-serif" fontSize="11" fontWeight="700" fill="#444" fontStyle="italic"><text x="8" y="9">4</text><text x="8" y="21">5</text></g></Box>, <Box><rect x="4" y="5" width="16" height="3.5" fill="#ddd" stroke="#222" /><rect x="4" y="11" width="16" height="3.5" fill="#ddd" stroke="#222" /><rect x="4" y="17" width="16" height="3" fill="#ddd" stroke="#222" /></Box>],
    null,
    [<Box c="url(#pinkg)"><P d="M1 16H23" s="#fff" w={1.2} /><C x={2.5} y={16} r={1.8} f="#fff" /><C x={17} y={16} r={1.8} f="#fff" /></Box>, <Box c="#40b31c"><path d="M2 2h5v6H2zM7 8h5v4H7zM12 2h5v6h-5z" fill="#dcf5c8" /><path d="M2 12h5v5H2zM12 8h5v4h-5zM17 12h5v5h-5zM7 17h5v5H7z" fill="#146a0c" /><path d="M17 2h5v5h-5zM12 17h5v5h-5z" fill="#8ae04a" /></Box>],
    null,
    [<Box c="#8fa3f2"><rect x="7.5" y="4" width="9" height="16" fill="#222" stroke="#000" /><rect x="8.5" y="5" width="7" height="6" fill="#e6ebff" /></Box>, <Plain><C x={12} y={12} r={9} s="#666" w={1.2} /><C x={12} y={12} r={4.5} s="#333" w={1.300} /><C x={12} y={12} r={1.6} f="#222" /><C x={5.5} y={6} r={1.5} f="#222" /><C x={18.5} y={6} r={1.5} f="#222" /><C x={5.5} y={18} r={1.5} f="#222" /><C x={18.5} y={18} r={1.5} f="#222" /></Plain>],
  ] },
  { name: "Util", w: "w-[109px]", cols: [
    [<Plain><P d="M7 14Q9 8 14 3Q15 10 18 14" s="#4b5a14" w={1.3} /><path d="M14 3Q8 0 5 5Q10 8 14 3z" fill="#3c9b1e" stroke="#1c5a0c" /><C x={7} y={18} r={4.5} f="#d3152a" s="#7a0713" /><C x={17.5} y={18.5} r={4.3} f="#d3152a" s="#7a0713" /><C x={5.5} y={16.5} r={1.2} f="#ff9ba5" s="none" /></Plain>, <Box><P d="M12 22V11M12 15L6 8M12 14L18 8M12 11L9 4M12 11L15 4M9 11L4 10M15 11L20 11M6 8L4 6M18 8L20 6M8 22H16" s="#111" w={1.5} /><path d="M4 11Q3 4 12 3T20 11Q17 8 16 12L14 9L12 11L9 9L8 12z" fill="#111" opacity=".65" /></Box>],
    null,
    [<Plain><path d="M2 8.5H12V4L22 12L12 20V15.5H2z" fill="#4c4c4c" stroke="#111" /></Plain>, <Plain><path d="M2 8.5H12V4L22 12L12 20V15.5H2z" fill="#f0f0f0" stroke="#666" /></Plain>],
    null,
    [<Plain><ellipse cx="9.500" cy="9" rx="7.500" ry="6.500" fill="#c6c6c6" stroke="#555" /><ellipse cx="7" cy="11" rx="3" ry="2" transform="rotate(-25 7 11)" fill="#555" /><ellipse cx="16" cy="15" rx="6" ry="7" transform="rotate(-30 16 15)" fill="#ea4f93" stroke="#7d1345" /><ellipse cx="14.500" cy="16" rx="2.5" ry="2" fill="#ffe0ee" stroke="#a03" /></Plain>, <Plain><P d="M9.5 2H14.5M10.5 2V9L4 19Q4 21.5 7 21.5H17Q20 21.5 20 19L13.5 9V2" f="#fbe3ee" s="#555" w={1.2} /><path d="M8 14H16.5L19.5 19Q19 21 17 21H7Q5 21 5 19z" fill="#e0387e" /></Plain>],
  ] },
  { name: "Spe...", w: "w-[33px]", cols: [[spk("#e028e0"), spk("#1818e8")]] },
];

/* ---------- Grasshopper: canvas ---------- */
type Port = [string, number];
type NodeT = { x: number; y: number; w: number; h: number; cap?: string; capX?: number; l: Port[]; r: Port[]; name?: string; extra?: boolean };
const rect = (x: number, y: number): NodeT => ({ x, y, w: 66, h: 85, cap: "Rectangle", capX: 19, l: [["P", 12], ["X", 32], ["Y", 52], ["R", 72]], r: [["R", 22], ["L", 62]] });
const move = (x: number, y: number): NodeT => ({ x, y, w: 68, h: 51, cap: "Move", capX: 20, l: [["G", 13.5], ["T", 36.5]], r: [["G", 13.5], ["X", 36.5]] });
const end = (x: number, y: number): NodeT => ({ x, y, w: 65, h: 45, cap: "End", capX: 19, l: [["C", 22]], r: [["S", 12], ["E", 32]] });
const plo = (x: number, y: number): NodeT => ({ x, y, w: 69, h: 72, cap: "Pl Origin", capX: 20, l: [["B", 18.5], ["O", 52.5]], r: [["Pl", 35.5]] });
const yn = (x: number, y: number): NodeT => ({ x, y, w: 64, h: 29, cap: "Y", capX: 17, l: [["F", 14]], r: [["V", 14]] });
const nodes: NodeT[] = [
  move(692, 261), end(806, 332), plo(980, 302), yn(1270, 265), rect(1278, 346), rect(1279, 473), end(804, 507), move(715, 577), plo(961, 535), yn(1309, 607),
  { x: 904, y: 462, w: 66, h: 32, cap: "XZ", capX: 20, l: [["O", 15.5]], r: [["P", 15.5]] },
  { x: 1042, y: 432, w: 51, h: 21, name: "Num", l: [["", 10.5]], r: [["", 10.5]] },
  { x: 1154, y: 422, w: 78, h: 46, cap: "Dom", capX: 35, l: [["A", 12], ["B", 32]], r: [["I", 22]], extra: true },
  { x: 658, y: 670, w: 67, h: 39, cap: "Rev", capX: 20, l: [], r: [["V", 19]] },
];

function Node({ n }: { n: NodeT }) {
  return (
    <div className="absolute" style={{ left: n.x - 686, top: n.y - 198, width: n.w, height: n.h }}>
      {[...n.l.map(p => [0, p[1]]), ...n.r.map(p => [n.w, p[1]])].map(([x, y], i) => (
        <div key={i} className="absolute h-[9px] w-[9px] rounded-full border-[1.5px] border-black bg-white" style={{ left: x - (x ? 4 : 5.5), top: y - 4.5 }} />
      ))}
      <div className="absolute inset-0 rounded-[3px] border border-[#1c1c22] bg-[linear-gradient(#dcdce6_0,#cdccd8_12%,#aaa8b8_20%,#a3a1b2_60%,#8f8da0_100%)] shadow-[inset_0_0_0_1px_rgba(255,255,255,0.18),0_1px_3px_rgba(0,0,0,0.2)]" />
      {n.l.map(([t, y]) => <span key={t + y} className="absolute w-4 text-center leading-[16px]" style={{ left: n.extra ? 18 : (n.capX ?? 0) / 2 - 6, top: y - 9 }}>{t}</span>)}
      {n.r.map(([t, y]) => <span key={t + y} className="absolute w-4 text-center leading-[16px]" style={{ left: (n.w + (n.capX ?? 0) + 25) / 2 - 11.5, top: y - 9 }}>{t}</span>)}
      {n.cap && (
        <div className="absolute inset-y-[2px] flex w-[25px] items-center justify-center rounded-[3px] border border-black bg-[linear-gradient(#8a8a8a_0,#4a4a4a_18%,#333_30%,#404040_100%)] shadow-[inset_0_0_0_1px_rgba(255,255,255,0.15)]" style={{ left: n.capX }}>
          <span className="-rotate-90 whitespace-nowrap text-[14px] leading-none tracking-[-0.5px] font-bold text-white">{n.cap}</span>
        </div>
      )}
      {n.extra && <div className="absolute top-[5px] left-[3px] h-[14px] w-[14px] overflow-hidden rounded-[2px] border border-[#444] bg-[#d8d8d8] text-center text-[20px] leading-[20px] font-bold text-[#555]">*</div>}
      {n.name && <div className="absolute inset-0 text-center leading-[18px] tracking-[-0.4px]">{n.name}</div>}
    </div>
  );
}

const dashed = [
  "M765 274.5C900 275 1050 279 1265 279.5", "M765 274.5C800 275 775 310 782 330C780 350 785 354 801 354.5", "M876 344.5C915 344.5 930 354.5 975 354.5",
  "M1054 337.5C1140 338 1190 358.5 1273 358.5", "M1338 279.5C1350 280 1355 282 1364 287", "M1348 368.5H1364", "M1350 495.5H1364",
  "M874 519.5C915 520 915 587 956 587.5", "M788 590.5C812 590 776 529 799 529.5", "M788 590.5C950 590 1130 621 1304 621.5",
  "M686 590.5H711", "M730 689.5C760 690 680 613 711 613.5", "M1035 570.5C1150 570 1160 485.5 1274 485.5", "M686 274.5H690", "M686 297.5H690",
];
const plain = [
  "M686 485C800 450 900 442 1038 442.5", "M975 477.5C1070 477 880 320 976 320.5", "M975 477.5C1010 478 915 553 957 553.5",
  "M1098 442.5C1120 442 1125 434.5 1149 434.5", "M1098 442.5C1120 443 1125 454.5 1149 454.5", "M1237 444.5C1275 444 1235 379 1273 378.5",
  "M1237 444.5C1260 444 1255 399 1273 398.5", "M1237 444.5C1275 445 1235 505 1274 505.5", "M1237 444.5C1280 445 1230 525 1274 525.5",
];
const greens = ["M684 654C850 590 960 505 1150 438C1220 412 1280 398 1364 382", "M926 743C1060 680 1190 630 1305 622"];

function Canvas() {
  return (
    <div className="relative h-[545px] w-[677px] overflow-hidden bg-[#d4d0c8] font-['Open_Sans',sans-serif] text-[12px] text-[#26262e]">
      <svg viewBox="686 198 677 545" className="absolute inset-0 h-[545px] w-[677px]" fill="none">
        <defs><radialGradient id="ball"><stop offset="0" stopColor="#fff" /><stop offset=".5" stopColor="#ddd" /><stop offset="1" stopColor="#b5b5b5" /></radialGradient></defs>
        <path d={[822.5, 972.5, 1122.5, 1272.5].map(x => `M${x} 198V743`).join("") + Array.from({ length: 11 }, (_, i) => `M686 ${205.5 + i * 50}H1363`).join("")} stroke="#bbb7b0" />
        {plain.map(d => <path key={d} d={d} stroke="#2b2927" strokeWidth="2.6" opacity=".75" />)}
        {dashed.map(d => <g key={d} strokeLinecap="round" strokeDasharray="9 8.5"><path d={d} stroke="#55534f" strokeWidth="4.8" /><path d={d} stroke="#b6b3ab" strokeWidth="2" /></g>)}
        {greens.map(d => <g key={d} opacity=".9"><path d={d} stroke="#8cc350" strokeWidth="5" /><path d={d} stroke="#c3d9a4" strokeWidth="2.2" /><path d={d} stroke="#9acb66" strokeWidth=".8" /></g>)}
        <path d="M1312 718Q1308 704 1323 695Q1334 689 1347 697Q1355 704 1355 711" stroke="#000" strokeWidth="2.5" />
        <path d="M1304 706l6-4 3 4-2 3zM1329 691.500l9 0-1 2h-7zM1322 694l-3 2 3 1zM1343 693l4 2-3 1z" fill="#000" stroke="#000" />
        <circle cx="1333.5" cy="713.5" r="20" fill="url(#ball)" stroke="#333" />
        <circle cx="1333.5" cy="713.5" r="19" stroke="#fff" strokeWidth="1.5" />
        <path d="M1337 695l5 3-5 3zM1315 707l6 2-5 3zM1326 731l3-5 3 5zM1353 720l-6-3 4 6z" fill="#fff" />
      </svg>
      {nodes.map((n, i) => <Node key={i} n={n} />)}
      <div className="absolute top-[517px] left-[-10px] h-[26px] w-[17px] border border-black bg-gradient-to-b from-[#d5d5d5] from-30% via-[#888] via-45% to-[#777]" />
    </div>
  );
}

const Arrow = () => <svg viewBox="0 0 6 4" className="h-[3px] w-[5px] shrink-0"><path d="M0 0h6L3 4z" fill="#000" /></svg>;

function Grasshopper() {
  return (
    <section className="relative flex h-[768px] w-[682px] shrink-0 flex-col border border-[#44464c] bg-[#f0f0f0] font-['Open_Sans',sans-serif] text-[12px] text-black shadow-[0_0_8px_rgba(0,0,0,0.5)]">
      <svg className="absolute h-0 w-0">
        <defs>
          <linearGradient id="hexg" x1="0" y1="0" x2="0" y2="1"><stop offset="0" stopColor="#555" /><stop offset=".4" stopColor="#222" /><stop offset="1" stopColor="#181818" /></linearGradient>
          <linearGradient id="boxg" x1="0" y1="0" x2="0" y2="1"><stop offset="0" stopColor="#c5c5c5" /><stop offset="1" stopColor="#808080" /></linearGradient>
          <linearGradient id="goldg" x1="0" y1="0" x2="0" y2="1"><stop offset="0" stopColor="#ffe58a" /><stop offset="1" stopColor="#f8a910" /></linearGradient>
          <linearGradient id="pinkg" x1="0" y1="0" x2="1" y2="1"><stop offset="0" stopColor="#ffd6ec" /><stop offset=".5" stopColor="#f2379b" /><stop offset="1" stopColor="#8a0b4e" /></linearGradient>
          <pattern id="chk" width="2" height="2" patternUnits="userSpaceOnUse"><rect width="2" height="2" fill="#999" /><path d="M0 0h1v1H0zM1 1h1v1H1z" fill="#333" /></pattern>
        </defs>
      </svg>
      <header className="flex h-[30px] shrink-0 items-center bg-white pl-[7px] text-[#9a9a9a]">
        <span className="origin-left scale-x-[0.94]">Grasshopper - vertical 2*</span>
        <svg viewBox="0 0 112 12" className="mr-[8px] ml-auto h-3 w-28" fill="none" stroke="#8a8a8a"><path d="M1 6.5H11M46.5 1.5H56.5V11.5H46.5zM93 1.5L103 11.5M103 1.5L93 11.5" /></svg>
      </header>
      <nav className="flex h-6 shrink-0 items-center bg-[#f7f7f7] pl-[14px] tracking-[-0.25px] whitespace-nowrap">
        <span className="w-[35px] origin-left scale-x-[0.92]">File</span><span className="w-[37px] origin-left scale-x-[0.94]">Edit</span><span className="w-[42px] origin-left scale-x-[0.94]">View</span><span className="w-[53px] origin-left scale-x-[0.9]">Display</span><span className="w-[57px] origin-left scale-x-[0.88]">Solution</span><span className="w-[41px] origin-left scale-x-[0.9]">Help</span><span className="origin-left scale-x-[0.93]">Speckle Suite</span><span className="mr-[9px] ml-auto origin-right scale-x-[0.92]">vertical 2</span>
      </nav>
      <div className="flex h-[22px] shrink-0 text-[12px] leading-[24px] text-[#707070]">
        <div className="h-[23px] w-[28px] rounded-t-[6px] border border-b-0 border-[#aaa] bg-white text-center leading-[20px] text-black">P</div>
        {"MSVCSMXTDHBMLWKKLIGKgIS".split("").map((c, i) => <div key={i} className="w-[28px] shrink-0 border-b border-[#aaa] text-center"><span className="inline-block scale-x-90">{c}</span></div>)}
        <div className="flex-1 border-b border-[#aaa] pl-[2px]">I</div>
      </div>
      <div className="flex h-[88px] shrink-0 gap-[3px] bg-gradient-to-b from-[#f4f4f4] to-[#e4e4e4] pt-[3px] pl-[2px]">
        {groups.map(g => (
          <div key={g.name} className={`flex h-[73px] shrink-0 flex-col overflow-hidden rounded-[4px] border border-[#8a8a8a] bg-gradient-to-b from-[#f0f0f0] to-[#d4d4d4] ${g.w}`}>
            <div className="flex h-[58px] pt-[3px] pl-[3px]">
              {g.cols.map((c, i) => c === null
                ? <div key={i} className="h-[52px] w-[10px] shrink-0"><div className="ml-[3px] h-full w-px bg-[#bcbcbc]" /></div>
                : <div key={i} className="flex w-7 shrink-0 flex-col gap-1">{c[0]}{c[1]}</div>)}
            </div>
            <div className={`flex h-[15px] shrink-0 items-center bg-gradient-to-b from-[#333] to-[#151515] text-[11px] leading-none text-white ${g.w === "w-[33px]" ? "justify-center" : ""}`}>
              {g.w === "w-[33px]" ? <span className="-translate-y-px scale-x-90">Spe...</span> : <><span className="flex-1 scale-x-[0.87] pl-1 text-center">{g.name}</span><svg viewBox="0 0 8 8" className="mr-[3px] h-2 w-2"><path d="M4 0v4M1 3.5h6L4 7.5z" fill="#999" stroke="#999" /></svg></>}
            </div>
          </div>
        ))}
      </div>
      <div className="mr-[1px] ml-px flex h-[32px] shrink-0 items-center border-t border-l border-[#6f6f6f] bg-gradient-to-b from-white to-[#ececec] pl-[3px]">
        <svg viewBox="0 0 24 24" className="h-6 w-6 shrink-0"><path d="M5 10V4l4-2h8v9" fill="#f2f2f2" stroke="#555" /><path d="M2.5 22V10h5l1.500-2H20V22z" fill="#62bb3c" stroke="#1f5c12" /><path d="M3 22l1-8h5l1.500-2H20.500V22z" fill="#98dc66" stroke="#2b7a18" strokeWidth=".8" /></svg>
        <svg viewBox="0 0 24 24" className="ml-[6px] h-6 w-6 shrink-0"><path d="M1.5 1.5H22.5V22.5H4.5L1.5 19.5z" fill="#2268d8" stroke="#0d2c68" /><rect x="5.5" y="2" width="13" height="10" fill="#e3e3e3" /><path d="M7 5h10M7 8h10" stroke="#999" /><rect x="7" y="15" width="10" height="7" fill="#d2daea" stroke="#123" strokeWidth=".7" /><rect x="8" y="16.5" width="3.5" height="5" fill="#123f9c" /></svg>
        <div className="ml-[6px] h-5 w-px bg-[#bdbdbd]" />
        <div className="ml-[5px] flex h-[25px] w-[70px] items-center border border-[#777] bg-white pl-[3px] text-[12.5px]">100%<svg viewBox="0 0 8 5" className="mr-1 ml-auto h-[5px] w-2"><path d="M.5.5L4 4 7.5.5" fill="none" stroke="#444" /></svg></div>
        <svg viewBox="0 0 20 20" className="mr-[6px] ml-[5px] h-5 w-5 shrink-0"><path d="M7 2.500H2.500V7M13 2.500h4.500V7M17.500 13v4.500H13M7 17.500H2.500V13" fill="none" stroke="#111" strokeWidth="2.6" /><path d="M8 8l4 4M12 8l-4 4" stroke="#111" strokeWidth="1.5" /></svg>
        <Arrow />
        <svg viewBox="0 0 24 24" className="mx-[8px] h-6 w-6 shrink-0"><path d="M1.500 12Q12 0 22.500 12Q12 23 1.500 12z" fill="#e4f4fb" stroke="#222" strokeWidth="1.6" /><circle cx="12" cy="11.500" r="5.500" fill="#53b4e6" stroke="#14507a" /><circle cx="12" cy="11.500" r="2.5" fill="#111" /><circle cx="10.5" cy="10" r="1.5" fill="#fff" /></svg>
        <Arrow />
        <svg viewBox="0 0 24 24" className="ml-[8px] h-6 w-6 shrink-0"><path d="M1 13Q7 10 5 14T2 19Q5 24 11 19" fill="none" stroke="#222" strokeWidth="1.800" /><path d="M9 12L15 7L22 2L21 9L16 18L9 21z" fill="#e3392b" stroke="#641" strokeWidth=".7" /><path d="M9 12l6 4-6 5z" fill="#f3b9a8" stroke="#422" strokeWidth=".6" /><path d="M9 17v4l3-1.500z" fill="#111" /><path d="M14 9l6-5" stroke="#fbb" strokeWidth="1.5" /></svg>
        <div className="mr-[3px] ml-auto flex items-center">
          <svg viewBox="0 0 24 24" className="h-6 w-6"><path d="M3 17Q3 12 9 12H16Q21 13 20 18Q12 26 3 18z" fill="#333" stroke="#111" /><path d="M4 9L9 2L17 2.500L19 6L15 13Q9 15 4 9z" fill="#c4c4c4" stroke="#555" /><ellipse cx="14.500" cy="6.500" rx="4" ry="3.500" fill="#f5f5f5" stroke="#888" /></svg>
          <svg viewBox="0 0 24 24" className="ml-[5px] h-6 w-6"><path d="M2 11L11 2Q20 0 22 7L13 20Q4 24 2 16z" fill="#eee" stroke="#222" strokeWidth="1.2" /><ellipse cx="7" cy="14.5" rx="3.8" ry="5.500" transform="rotate(-35 7 14.5)" fill="#fff" stroke="#222" /><ellipse cx="16.5" cy="8.5" rx="3.5" ry="5" transform="rotate(-35 16.5 8.5)" fill="#fff" stroke="#222" /><ellipse cx="16.5" cy="8.5" rx="2" ry="3" transform="rotate(-35 16.5 8.5)" fill="none" stroke="#777" /></svg>
          <div className="ml-[3px] flex h-7 w-7 items-center justify-center border border-[#2a7ab8] bg-[#eef5fb]"><svg viewBox="0 0 24 24" className="h-6 w-6"><path d="M2 11L9 3L13 2Q22 4 22 10L14 21Q6 22 2 15z" fill="#b8151a" stroke="#4a0508" /><ellipse cx="16.500" cy="9" rx="4" ry="5.500" transform="rotate(-35 16.500 9)" fill="#dd4a42" stroke="#7a0c10" /><path d="M4 11L11 4" stroke="#ef7a70" strokeWidth="1.500" /></svg></div>
          <div className="ml-[8px] h-5 w-px bg-[#bdbdbd]" />
          <svg viewBox="0 0 24 24" className="ml-[9px] h-6 w-6"><path d="M2 11Q2 17 7 20Q12 22 15 18L20 14L8 5z" fill="#ddd" stroke="#555" /><path d="M7 5L12 2Q20 1 22.500 8L17 15z" fill="#4fae28" stroke="#1d5310" /><ellipse cx="16.500" cy="8" rx="3.600" ry="4.500" transform="rotate(-40 16.500 8)" fill="#a8dd86" stroke="#2a6a18" /><path d="M2 4L19 21" stroke="#222" strokeWidth="1.4" /></svg>
          <svg viewBox="0 0 24 24" className="ml-[4px] h-6 w-6"><circle cx="12" cy="12" r="9.5" fill="#e2e2e2" stroke="#333" strokeWidth="1.2" /><path d="M12 2.5A9.5 9.5 0 0 0 12 21.5z" fill="#ec8b2b" stroke="#5b2a00" /><circle cx="8.5" cy="8" r="2" fill="#ffd9a8" /></svg>
          <div className="ml-[5px] h-5 w-px bg-[#bdbdbd]" />
          <svg viewBox="0 0 24 24" className="mr-[5px] ml-[4px] h-6 w-6"><path d="M3.500 7.500L11 3L19 5.500L21 13L16 20L8 20.500L3.500 15z" fill="#5b9ae0" stroke="#173c78" strokeWidth="1.4" strokeLinejoin="round" /><path d="M6 8.500l5-3.500 6 2-1 6-7 2z" fill="#b5dbfa" opacity=".8" /></svg>
          <Arrow />
        </div>
      </div>
      <div className="ml-[1px] flex h-[546px] shrink-0 border-t border-[#f8f8f8]"><Canvas /></div>
      <footer className="flex flex-1 items-center bg-[#f6f6f6] pt-[2px] pl-[2px] tracking-[-0.3px]">
        <svg viewBox="0 0 18 18" className="h-[18px] w-[18px]"><circle cx="9" cy="9" r="8" fill="#1672c8" stroke="#0a2c5c" /><circle cx="9" cy="9" r="6" fill="#1b5fa8" /><path d="M7.5 3h3l-.5 7H8z" fill="#fff" /><circle cx="9" cy="13" r="1.5" fill="#fff" /><path d="M4 5v8M14 5v8" stroke="#8fd0ff" /></svg>
        <span className="ml-[1px] origin-left scale-x-[0.91] whitespace-pre">{"Solution completed in ~7.7 seconds (140 seconds ago)"}</span>
        <span className="ml-auto origin-right scale-x-95 text-[#777]">0.9.0076</span>
        <svg viewBox="0 0 12 12" className="mt-1 mr-[2px] ml-1 h-3 w-3"><path d="M9 1h2v2H9zM9 5h2v2H9zM5 5h2v2H5zM9 9h2v2H9zM5 9h2v2H5zM1 9h2v2H1z" fill="#999" /></svg>
      </footer>
    </section>
  );
}

export default function App() {
  return (
    <main className="flex h-[768px] w-[1366px] overflow-hidden bg-[#e0e3ea] font-['Liberation_Sans',sans-serif]">
      <Rhino />
      <Grasshopper />
    </main>
  );
}
